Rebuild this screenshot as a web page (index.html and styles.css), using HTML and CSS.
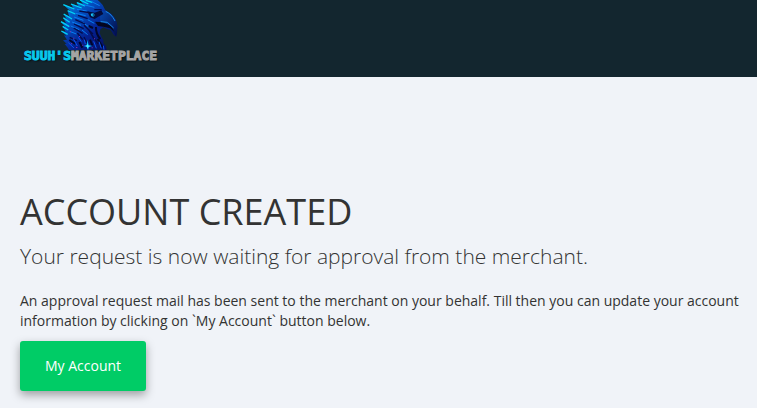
FILE: index.html
```html
<!DOCTYPE html>
<html lang="en">
<head>
  <meta charset="UTF-8" />
  <meta name="viewport" content="width=device-width, initial-scale=1.0"/>
  <title>Account Created</title>
  <link rel="stylesheet" href="styles.css">
</head>
<body>
  <header class="header">
    <a class="logo" href="#">
      <svg class="logo-bird" viewBox="0 0 210 150" aria-hidden="true">
        <defs>
          <linearGradient id="feathers" x1="0" y1="0" x2="1" y2="1">
            <stop offset="0" stop-color="#0098e0"/>
            <stop offset="0.3" stop-color="#0450c0"/>
            <stop offset="0.6" stop-color="#042090"/>
            <stop offset="1" stop-color="#050848"/>
          </linearGradient>
          <linearGradient id="beak" x1="0" y1="0" x2="1" y2="1">
            <stop offset="0" stop-color="#0648b0"/>
            <stop offset="1" stop-color="#020b45"/>
          </linearGradient>
        </defs>
        <path fill="url(#feathers)" d="M75 0H128L134 5 143 15 151 31 169 42 182 58 187 78 184 110 176 104 168 91 154 86 145 82 136 88 134 99 139 111 145 121 145 130 153 138 155 150H42L37 142 29 132 35 131 24 121 36 119 27 106 34 108 19 93 32 95 23 79 31 82 18 65 33 69 25 53 35 58 26 42 42 49 38 32 49 36 25 14 55 24 48 12 70 17 64 7 84 11Z"/>
        <!-- beak -->
        <path fill="url(#beak)" d="M137 34Q153 31 168 42Q185 56 187 79Q188 96 183 110Q173 90 160 85L141 78Q132 65 137 34Z"/>
        <path fill="#04061f" d="M120 65L144 67 168 78 178 95 166 85 145 80 129 78Z"/>
        <path fill="none" stroke="#178bea" stroke-width="3" d="M152 34Q170 42 180 63M137 65L157 67 176 84"/>
        <path fill="#030c3c" d="M97 34L119 38 139 31 145 42 130 50 119 57 105 52Z"/>
        <path fill="#18c8ff" d="M107 41L115 40 119 45 115 50 109 48Z"/>
        <circle fill="#02072c" cx="115" cy="45" r="2"/>
        <!-- bright feather edges -->
        <path fill="none" stroke="#00d6f5" stroke-width="4" d="M25 14L58 27M75 0L100 12M48 12L80 24M38 32L61 42M26 42L51 57M25 53L44 67M18 65L43 80M23 79L40 90M19 93L38 103M66 8L90 18M92 1L112 7"/>
        <path fill="none" stroke="#087ff1" stroke-width="3" d="M66 28L95 33M86 14L118 22M63 40L92 47M57 51L85 61M51 66L78 76M47 78L73 89M44 94L64 102M83 67L103 82M98 59L118 70M81 90L98 104M110 5L134 17"/>
        <path fill="none" stroke="#050b4a" stroke-width="4" d="M73 33L102 38M69 46L98 56M61 59L90 72M57 72L86 86M56 84L83 100M87 76L114 102M67 99L83 119M101 89L117 117M111 105L129 132M87 111L96 130M118 29L140 29M44 112L66 122"/>
        <path fill="none" stroke="#02062b" stroke-width="6" d="M123 81Q122 101 136 117M73 126L82 143M105 119L112 136M128 117L143 142M43 120L61 132M101 78L114 84"/>
        <path fill="none" stroke="#0953ef" stroke-width="3" d="M40 128L57 144M55 116L67 138M70 112L79 125M88 119L91 132M116 124L124 145M132 125L139 145M145 137L147 149"/>
        <path fill="#8030b5" d="M45 94h3v3h-3zM55 113h3v3h-3zM72 108h3v3h-3zM48 130h3v3h-3zM63 141h4v3h-4zM82 134h3v3h-3zM117 115h3v3h-3zM110 142h3v3h-3z"/>
        <path fill="#00aef7" d="M97 120L101 135 112 138 102 141 99 150 95 141 86 138 95 135Z"/>
        <path fill="#53ecff" d="M98 130L100 137 105 138 100 140 98 147 96 140 92 138 96 136Z"/>
      </svg>
      <span class="logo-text"><span class="logo-name">SUUH'S</span><span class="logo-market">MARKETPLACE</span></span>
    </a>
  </header>

  <main class="content">
    <h1>ACCOUNT CREATED</h1>
    <h3>Your request is now waiting for approval from the merchant.</h3>
    <p>An approval request mail has been sent to the merchant on your behalf. Till then you can update your account information by clicking on `My Account` button below.</p>
    <button class="btn" type="button">My Account</button>
  </main>
</body>
</html>
```
FILE: styles.css
```css
* {
  box-sizing: border-box;
}

body {
  margin: 0;
  font-family: "Open Sans", sans-serif;
  font-size: 14px;
  line-height: 20px;
  color: #333;
  background-color: #f0f3f8;
}

.header {
  background-color: #13262f;
  padding: 0 24px 11px;
}

.logo {
  display: inline-flex;
  flex-direction: column;
  height: 66px;
  text-decoration: none;
  vertical-align: top;
}

.logo-bird {
  width: 70px;
  height: 50px;
  margin-left: 31px;
}

/* the wordmark overlaps the base of the bird */
.logo-text {
  position: relative;
  margin-top: -4px;
  font-family: "DejaVu Sans Mono", monospace;
  font-size: 13px;
  font-weight: bold;
  line-height: 20px;
  white-space: nowrap;
  text-shadow: 1px 1px 2px #000;
  -webkit-text-stroke: 1px;
}

.logo-name {
  color: #08c8ed;
}

.logo-market {
  color: #a5a5a5;
}

.content {
  padding: 115px 16px 16px 20px;
}

h1 {
  margin: 0;
  font-size: 36px;
  font-weight: 400;
  line-height: 40px;
}

h3 {
  margin: 9px 0 20px;
  font-size: 21px;
  font-weight: 300;
  line-height: 30px;
}

p {
  margin: 0 0 10px;
}

.btn {
  height: 50px;
  padding: 0 25px;
  border: none;
  border-radius: 3px;
  background-color: #00cc66;
  color: #fff;
  font-family: inherit;
  font-size: 14px;
  line-height: 20px;
  cursor: pointer;
  box-shadow: 0 4px 10px rgba(0, 0, 0, 0.35);
}

.btn:hover {
  background-color: #00b85c;
}
```
